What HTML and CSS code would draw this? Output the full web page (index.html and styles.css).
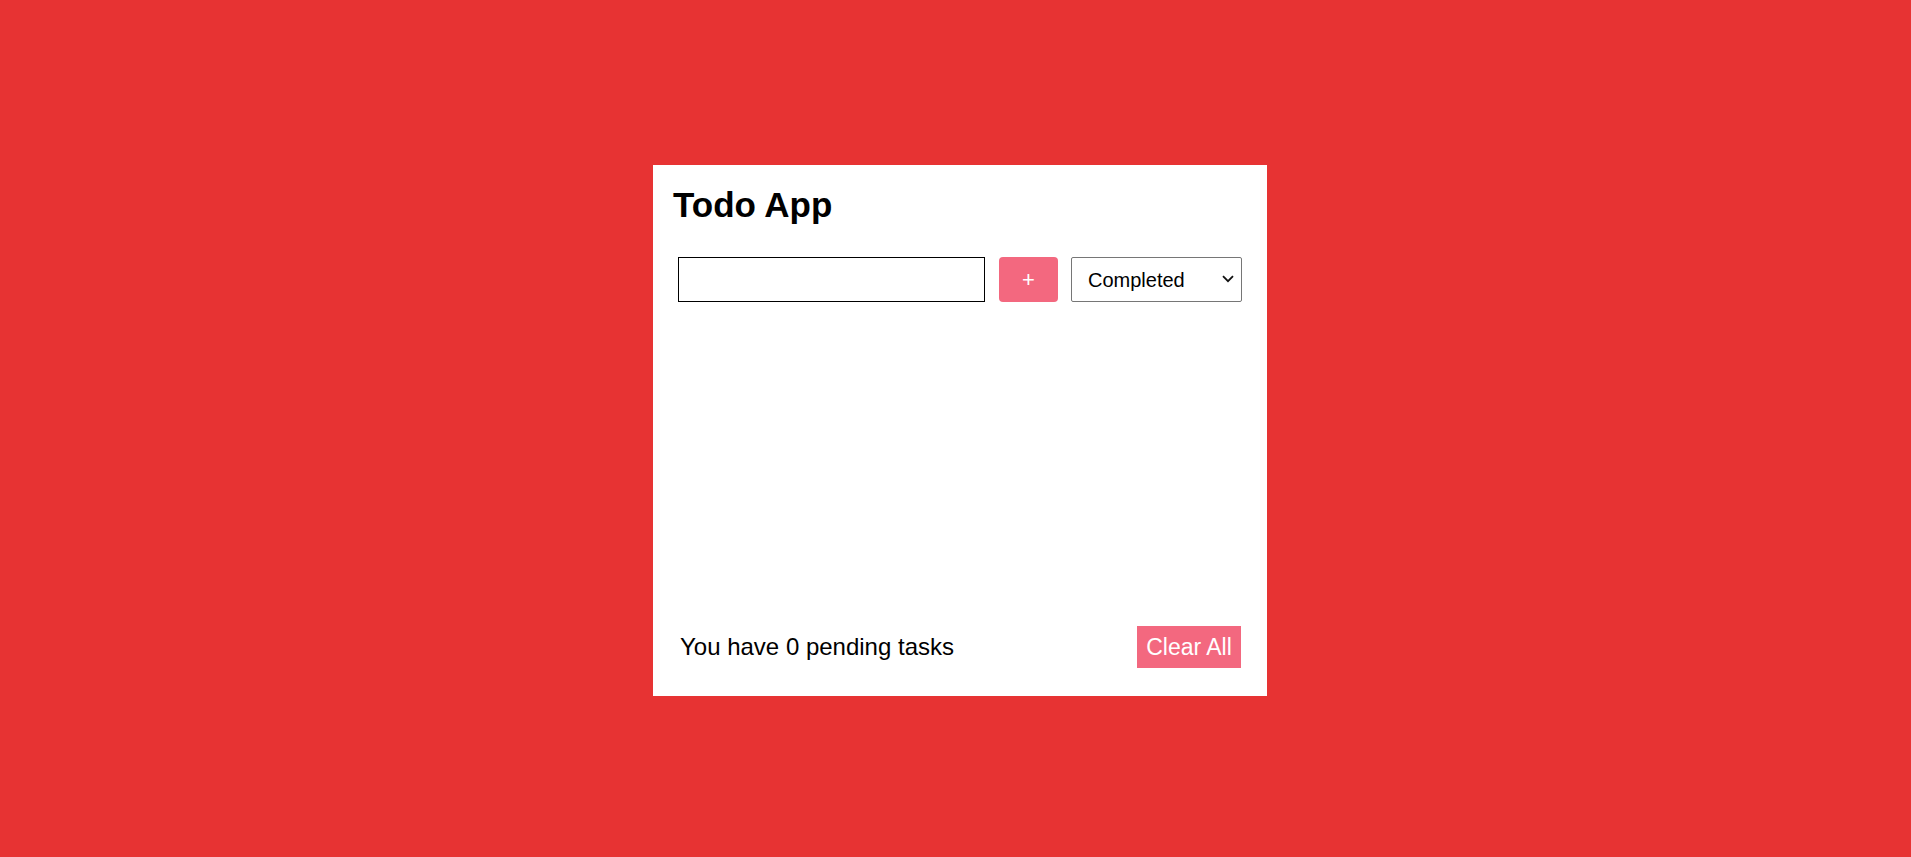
FILE: index.html
```html
<!DOCTYPE html>
<html lang="en">
<head>
<meta charset="utf-8">
<title>Todo App</title>
<link rel="stylesheet" href="styles.css">
</head>
<body>
<main class="page">
  <section class="card">
    <h1 class="title">Todo App</h1>
    <div class="add-row">
      <input class="task-input" type="text" aria-label="New task">
      <button class="add-btn" type="button">+</button>
      <div class="select-wrap">
        <select class="filter" aria-label="Filter">
          <option>All</option>
          <option selected>Completed</option>
          <option>Pending</option>
        </select>
        <svg class="chevron" width="12" height="8" viewBox="0 0 12 8" aria-hidden="true">
          <path d="M1 1.2 L6 6.2 L11 1.2" fill="none" stroke="#111" stroke-width="1.8"/>
        </svg>
      </div>
    </div>
    <ul class="task-list"></ul>
    <div class="footer">
      <span class="pending">You have 0 pending tasks</span>
      <button class="clear-btn" type="button">Clear All</button>
    </div>
  </section>
</main>
</body>
</html>
```

FILE: styles.css
```css
* {
  box-sizing: border-box;
}

html, body {
  margin: 0;
  padding: 0;
  height: 100%;
}

body {
  background: #e73333;
  font-family: "Liberation Sans", Arial, sans-serif;
  color: #000;
}

.page {
  min-height: 100vh;
  display: flex;
  align-items: center;
  justify-content: center;
  padding: 4px 0 0 9px;
}

.card {
  width: 614px;
  height: 531px;
  background: #fff;
  padding: 20px;
  display: flex;
  flex-direction: column;
}

.title {
  margin: 0;
  font-size: 35px;
  font-weight: bold;
  line-height: 40px;
}

.add-row {
  display: flex;
  align-items: center;
  padding: 0 5px;
  margin-top: 32px;
}

.task-input {
  width: 307px;
  height: 45px;
  border: 1px solid #000;
  border-radius: 0;
  margin: 0;
  padding: 0 8px;
  font-family: inherit;
  font-size: 20px;
  outline: none;
}

.add-btn {
  width: 59px;
  height: 45px;
  margin: 0 13px 0 14px;
  border: none;
  border-radius: 4px;
  background: #f3687f;
  color: #fff;
  font-family: inherit;
  font-size: 22px;
  padding: 0;
}

.select-wrap {
  position: relative;
  width: 171px;
  height: 45px;
}

.filter {
  -webkit-appearance: none;
  appearance: none;
  width: 100%;
  height: 100%;
  border: 1px solid #767676;
  border-radius: 2px;
  background: #fff;
  color: #000;
  font-family: inherit;
  font-size: 20px;
  padding: 0 28px 0 16px;
  margin: 0;
}

.chevron {
  position: absolute;
  right: 8px;
  top: 18px;
  pointer-events: none;
}

.task-list {
  flex: 1;
  margin: 0;
  padding: 0;
  list-style: none;
}

.footer {
  display: flex;
  align-items: center;
  justify-content: space-between;
  padding: 0 6px 8px 7px;
}

.pending {
  font-size: 24px;
}

.clear-btn {
  width: 104px;
  height: 42px;
  border: none;
  border-radius: 0;
  background: #f3687f;
  color: #fff;
  font-family: inherit;
  font-size: 23px;
  padding: 0;
}
```
